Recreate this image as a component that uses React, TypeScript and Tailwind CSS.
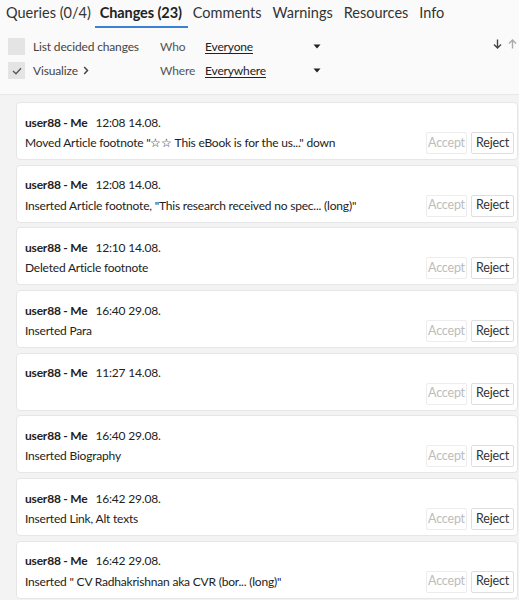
import React from "react";

type Change = { time: string; text: string };

const changes: Change[] = [
  { time: "12:08 14.08.", text: "Moved Article footnote \"☆☆ This eBook is for the us...\" down" },
  { time: "12:08 14.08.", text: "Inserted Article footnote, \"This research received no spec... (long)\"" },
  { time: "12:10 14.08.", text: "Deleted Article footnote" },
  { time: "16:40 29.08.", text: "Inserted Para" },
  { time: "11:27 14.08.", text: "" },
  { time: "16:40 29.08.", text: "Inserted Biography" },
  { time: "16:42 29.08.", text: "Inserted Link, Alt texts" },
  { time: "16:42 29.08.", text: "Inserted \" CV Radhakrishnan aka CVR (bor... (long)\"" },
];

const tabs = ["Queries (0/4)", "Changes (23)", "Comments", "Warnings", "Resources", "Info"];

function Caret() {
  return (
    <svg width="8" height="5" viewBox="0 0 8 5" className="fill-[#222]">
      <path d="M0.5 0.5 H7.5 L4 4.5 Z" />
    </svg>
  );
}

function ChangeCard({ c }: { c: Change }) {
  return (
    <div className="h-[58px] shrink-0 rounded-[4px] border border-[#e6e6e6] bg-white pl-[8px] pr-[3px] pt-[10px]">
      <div className="flex h-[19px] items-center gap-[8px] text-[12px] tracking-[-0.2px] text-[#222]">
        <span className="font-bold">user88 - Me</span>
        <span>{c.time}</span>
      </div>
      <div className="flex h-[22px] items-center">
        <span className="flex-1 truncate text-[12px] tracking-[-0.2px] text-[#222]">{c.text}</span>
        <button className="ml-[4px] h-[22px] w-[41px] rounded-[2px] border border-[#ededed] bg-white text-[12.5px] tracking-[-0.2px] text-[#bcbcbc]">
          Accept
        </button>
        <button className="ml-[4px] h-[22px] w-[43px] rounded-[2px] border border-[#dedede] bg-white text-[12.5px] tracking-[-0.2px] text-[#333]">
          Reject
        </button>
      </div>
    </div>
  );
}

export default function App() {
  return (
    <div
      className="flex h-[600px] w-[519px] flex-col overflow-hidden bg-[#f3f3f3]"
      style={{ fontFamily: "Lato, 'Noto Sans', sans-serif" }}
    >
      <div className="border-b border-[#e8e8e8] bg-[#fafafa]">
        <div className="flex h-[30px] items-start gap-[11px] pl-[6px] pt-[2px] text-[14.5px] text-[#333]">
          {tabs.map((t, i) => (
            <div
              key={t}
              className={i === 1 ? "relative -ml-[2px] font-bold tracking-[-0.1px] text-[#222]" : ""}
            >
              {t}
              {i === 1 && <div className="absolute bottom-[-4px] left-[-5px] right-[-6px] h-[2px] bg-[#3b82d6]" />}
            </div>
          ))}
        </div>
        <div className="flex pb-[15px] pl-[8px] pr-[2px] pt-[8px] text-[12px] tracking-[-0.15px]">
          <div className="flex w-[152px] flex-col gap-[7px]">
            <label className="flex h-[17px] items-center gap-[8px] text-[#444]">
              <span className="h-[17px] w-[17px] bg-[#e4e4e4]" />
              List decided changes
            </label>
            <label className="flex h-[17px] items-center gap-[8px] text-[#444]">
              <span className="flex h-[17px] w-[17px] items-center justify-center bg-[#e4e4e4]">
                <svg width="10" height="8" viewBox="0 0 10 8" fill="none" stroke="#555" strokeWidth="1.3">
                  <path d="M1 4 L4 6.8 L9 1.2" />
                </svg>
              </span>
              Visualize
              <svg width="6" height="9" viewBox="0 0 6 9" fill="none" stroke="#444" strokeWidth="1.5" className="-ml-[3px]">
                <path d="M1.2 1 L4.5 4.5 L1.2 8" />
              </svg>
            </label>
          </div>
          <div className="grid grid-cols-[45px_108px_8px] gap-y-[7px] text-[#555]">
            <span className="h-[17px] leading-[17px]">Who</span>
            <span className="h-[17px] leading-[17px] text-[#222] underline underline-offset-2">Everyone</span>
            <span className="flex items-center"><Caret /></span>
            <span className="h-[17px] leading-[17px]">Where</span>
            <span className="h-[17px] leading-[17px] text-[#222] underline underline-offset-2">Everywhere</span>
            <span className="flex items-center"><Caret /></span>
          </div>
          <div className="-mt-[3px] ml-auto flex h-[17px] items-center gap-[6px]">
            <svg width="9" height="10" viewBox="0 0 9 10" fill="none" stroke="#444" strokeWidth="1.4">
              <path d="M4.5 0.5 V9 M1 5.5 L4.5 9 L8 5.5" />
            </svg>
            <svg width="9" height="10" viewBox="0 0 9 10" fill="none" stroke="#aaa" strokeWidth="1.4">
              <path d="M4.5 9.5 V1 M1 4.5 L4.5 1 L8 4.5" />
            </svg>
          </div>
        </div>
      </div>
      <div className="flex flex-col gap-[4.7px] pl-[16px] pr-[1px] pt-[7px]">
        {changes.map((c, i) => (
          <ChangeCard key={i} c={c} />
        ))}
      </div>
    </div>
  );
}
